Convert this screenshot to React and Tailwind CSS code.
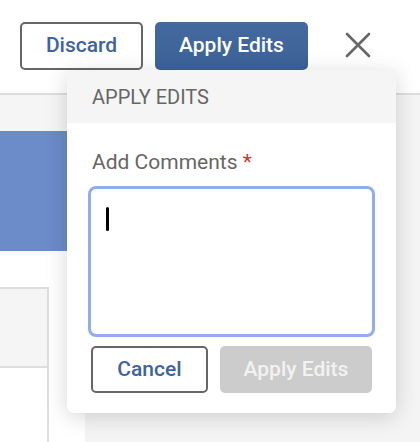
import React from 'react';

function CloseIcon() {
  return (
    <svg width="26" height="26" viewBox="0 0 26 26" fill="none" stroke="#666666" strokeWidth="2.6" strokeLinecap="round">
      <path d="M2 2 L24 24 M24 2 L2 24" />
    </svg>
  );
}

export default function App() {
  return (
    <div className="relative w-[420px] h-[442px] overflow-hidden bg-white font-['Roboto',sans-serif]">
      {/* Toolbar */}
      <div className="h-[95px] border-b-2 border-[#dddddd] flex items-start pt-[22px] pl-[20px]">
        <button className="w-[123px] h-[48px] rounded-[5px] border-2 border-[#666666] text-[21px] font-medium text-[#3e64a0]">
          Discard
        </button>
        <button className="ml-[12px] w-[153px] h-[48px] rounded-[5px] bg-gradient-to-b from-[#43699f] to-[#3c6299] text-[21px] font-medium text-white">
          Apply Edits
        </button>
        <div className="ml-[37px] mt-[10px]">
          <CloseIcon />
        </div>
      </div>

      {/* Page body */}
      <div className="flex h-[347px]">
        <div className="w-[85px] flex flex-col bg-white">
          <div className="h-[36px] bg-[#f5f5f5]" />
          <div className="h-[120px] bg-[#6b8bc9]" />
          <div className="h-[36px]" />
          <div className="w-[49px] flex-1 border-t-2 border-r-2 border-[#dddddd]">
            <div className="h-[79px] bg-[#f5f5f5] border-b-2 border-[#dddddd]" />
          </div>
        </div>
        <div className="flex-1 bg-[#f4f4f4]" />
      </div>

      {/* Apply edits popover */}
      <div className="absolute left-[67px] top-[70px] w-[329px] h-[343px] bg-white rounded-b-[7px] shadow-[0_4px_22px_rgba(0,0,0,0.16)]">
        <div className="h-[53px] bg-[#f5f5f5] flex items-center px-[25px] text-[20px] text-[#666666] uppercase">
          Apply Edits
        </div>
        <div className="px-[21px]">
          <div className="mt-[26px] pl-[4px] text-[21px] leading-[26px] text-[#666666]">
            Add Comments <span className="text-[#d2362e]">*</span>
          </div>
          <div className="mt-[11px] h-[151px] rounded-[8px] border-[3px] border-[#8fadef] px-[15px] pt-[18px]">
            <div className="w-[3px] h-[24px] rounded-full bg-black" />
          </div>
          <div className="mt-[9px] flex gap-[12px] px-[3px]">
            <button className="w-[117px] h-[47px] rounded-[5px] border-2 border-[#666666] text-[21px] font-medium text-[#3e64a0]">
              Cancel
            </button>
            <button className="w-[152px] h-[47px] rounded-[5px] bg-[#cccccc] text-[21px] font-medium text-[#f2f2f2]">
              Apply Edits
            </button>
          </div>
        </div>
      </div>
    </div>
  );
}
